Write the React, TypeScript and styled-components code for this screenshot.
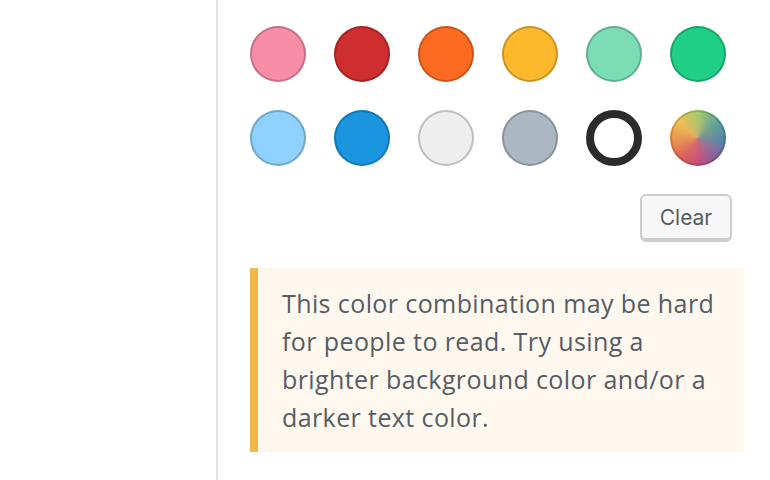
import React from "react";
import styled, { createGlobalStyle } from "styled-components";

const Global = createGlobalStyle`
  html, body { margin: 0; padding: 0; background: #fff; }
  body { font-family: "Open Sans", "Noto Sans", "Liberation Sans", sans-serif; }
`;

const Page = styled.div`
  display: flex;
  height: 480px;
  width: 770px;
  overflow: hidden;
`;

const Gutter = styled.div`
  width: 216px;
  flex: none;
  border-right: 2px solid #e2e4e7;
`;

const Panel = styled.div`
  width: 494px;
  padding: 26px 0 0 32px;
  display: flex;
  flex-direction: column;
`;

const Swatches = styled.div`
  display: grid;
  grid-template-columns: repeat(6, 56px);
  gap: 28px;
`;

const Swatch = styled.div<{ $c: string }>`
  width: 56px;
  height: 56px;
  border-radius: 50%;
  background: ${(p) => p.$c};
  box-shadow: inset 0 0 0 2px rgba(0, 0, 0, 0.2);
`;

const RingSwatch = styled.div`
  width: 56px;
  height: 56px;
  box-sizing: border-box;
  border-radius: 50%;
  border: 8px solid #2b2b2b;
  background: #fff;
`;

const CustomSwatch = styled.div`
  width: 56px;
  height: 56px;
  border-radius: 50%;
  background:
    radial-gradient(circle at 50% 50%, rgba(210, 150, 120, 0.45), rgba(210, 150, 120, 0) 70%),
    conic-gradient(
      from 0deg,
      #a5cf6c,
      #55a49a 50deg,
      #4d86ad 95deg,
      #8a5c9e 140deg,
      #c54a78 180deg,
      #df5f5c 220deg,
      #eb9348 265deg,
      #f2c150 310deg,
      #a5cf6c 360deg
    );
  box-shadow: inset 0 0 0 2px rgba(0, 0, 0, 0.15);
`;

const Actions = styled.div`
  display: flex;
  justify-content: flex-end;
  padding-right: 12px;
  margin-top: 28px;
`;

const ClearButton = styled.button`
  width: 92px;
  height: 48px;
  box-sizing: border-box;
  background: #f7f7f7;
  border: 2px solid #cccccc;
  border-radius: 6px;
  box-shadow: inset 0 -2px 0 #cccccc;
  color: #555d66;
  font-family: Inter, sans-serif;
  font-size: 21px;
  padding: 0 0 2px;
`;

const Notice = styled.div`
  margin-top: 26px;
  background: #fef8ee;
  border-left: 8px solid #f0b849;
  padding: 16px 20px 16px 24px;
  color: #555d66;
  font-size: 25px;
  letter-spacing: 0.4px;
  line-height: 38px;
`;

const colors = [
  "#f78da7",
  "#cf2e2e",
  "#fd6a21",
  "#fcb92c",
  "#7bdcb5",
  "#1fcf85",
  "#8ed1fc",
  "#1a95e0",
  "#eeeeee",
  "#abb8c3",
];

export default function App() {
  return (
    <Page>
      <Global />
      <Gutter />
      <Panel>
        <Swatches>
          {colors.map((c) => (
            <Swatch key={c} $c={c} />
          ))}
          <RingSwatch />
          <CustomSwatch />
        </Swatches>
        <Actions>
          <ClearButton>Clear</ClearButton>
        </Actions>
        <Notice>
          This color combination may be hard for people to read. Try using a brighter background color
          and/or a darker text color.
        </Notice>
      </Panel>
    </Page>
  );
}
